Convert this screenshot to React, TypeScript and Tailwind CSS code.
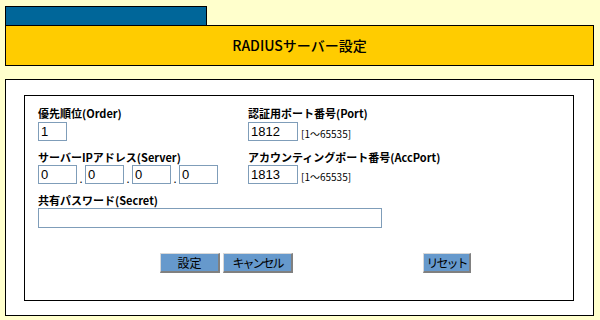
import React from "react";

const labelCls =
  "h-[14px] leading-[14px] text-[11px] font-bold text-black whitespace-nowrap";
const inputCls =
  "block h-[19px] border border-[#7f9db9] bg-white px-[2px] text-[13px] leading-[17px] text-black outline-none";
const rangeCls = "ml-[3px] text-[10px] text-black whitespace-nowrap";
const buttonCls =
  "h-[20px] whitespace-nowrap bg-[#6699cc] border-t border-l border-[#d8d8d8] border-b-2 border-r-2 border-b-[#808080] border-r-[#808080] text-[12px] leading-[16px] text-black";

export default function App() {
  return (
    <div
      className="w-[600px] h-[320px] overflow-hidden bg-[#ffffcc] pt-[6px] pl-[5px]"
      style={{ fontFamily: '"Liberation Sans", "Noto Sans CJK JP", sans-serif' }}
    >
      {/* tab */}
      <div className="w-[202px] h-[19px] bg-[#006699] border border-b-0 border-black" />
      {/* header */}
      <div className="w-[589px] h-[41px] bg-[#ffcc00] border border-black flex items-center justify-center">
        <span className="text-[14px] font-medium text-black" style={{ fontFamily: '"Noto Sans CJK JP", sans-serif' }}>
          RADIUSサーバー設定
        </span>
      </div>

      {/* panel */}
      <div className="mt-[13px] w-[589px] h-[237px] bg-white border border-black pt-[15px] pl-[18px]">
        <div
          className="w-[550px] h-[206px] border border-black pt-[10px] pl-[13px]"
          style={{ fontFamily: '"Noto Sans CJK JP", sans-serif' }}
        >
          <div className="flex">
            <div className="w-[210px]">
              <div className={labelCls}>優先順位(Order)</div>
              <input
                readOnly
                value="1"
                className={`${inputCls} mt-[2px] w-[29px]`}
                style={{ fontFamily: '"Liberation Sans", sans-serif' }}
              />
            </div>
            <div>
              <div className={labelCls}>認証用ポート番号(Port)</div>
              <div className="mt-[2px] flex items-end">
                <input
                  readOnly
                  value="1812"
                  className={`${inputCls} w-[50px]`}
                  style={{ fontFamily: '"Liberation Sans", sans-serif' }}
                />
                <span className={rangeCls}>[1～65535]</span>
              </div>
            </div>
          </div>

          <div className="mt-[9px] flex">
            <div className="w-[210px]">
              <div className={labelCls}>サーバーIPアドレス(Server)</div>
              <div className="mt-[1px] flex items-end">
                {["0", "0", "0", "0"].map((v, i) => (
                  <React.Fragment key={i}>
                    {i > 0 && (
                      <span className="w-[8px] text-center text-[11px] leading-[12px] text-black">.</span>
                    )}
                    <input
                      readOnly
                      value={v}
                      className={`${inputCls} w-[39px]`}
                      style={{ fontFamily: '"Liberation Sans", sans-serif' }}
                    />
                  </React.Fragment>
                ))}
              </div>
            </div>
            <div>
              <div className={labelCls}>アカウンティングポート番号(AccPort)</div>
              <div className="mt-[1px] flex items-end">
                <input
                  readOnly
                  value="1813"
                  className={`${inputCls} w-[50px]`}
                  style={{ fontFamily: '"Liberation Sans", sans-serif' }}
                />
                <span className={rangeCls}>[1～65535]</span>
              </div>
            </div>
          </div>

          <div className="mt-[9px]">
            <div className={labelCls}>共有パスワード(Secret)</div>
            <input readOnly value="" className={`${inputCls} mt-[1px] h-[20px] w-[344px]`} />
          </div>

          <div className="mt-[25px] flex">
            <button className={`${buttonCls} ml-[122px] w-[60px]`}>設定</button>
            <button className={`${buttonCls} ml-[3px] w-[70px] tracking-[-2px]`}>キャンセル</button>
            <button className={`${buttonCls} ml-[130px] w-[48px] tracking-[-2px]`}>リセット</button>
          </div>
        </div>
      </div>
    </div>
  );
}
